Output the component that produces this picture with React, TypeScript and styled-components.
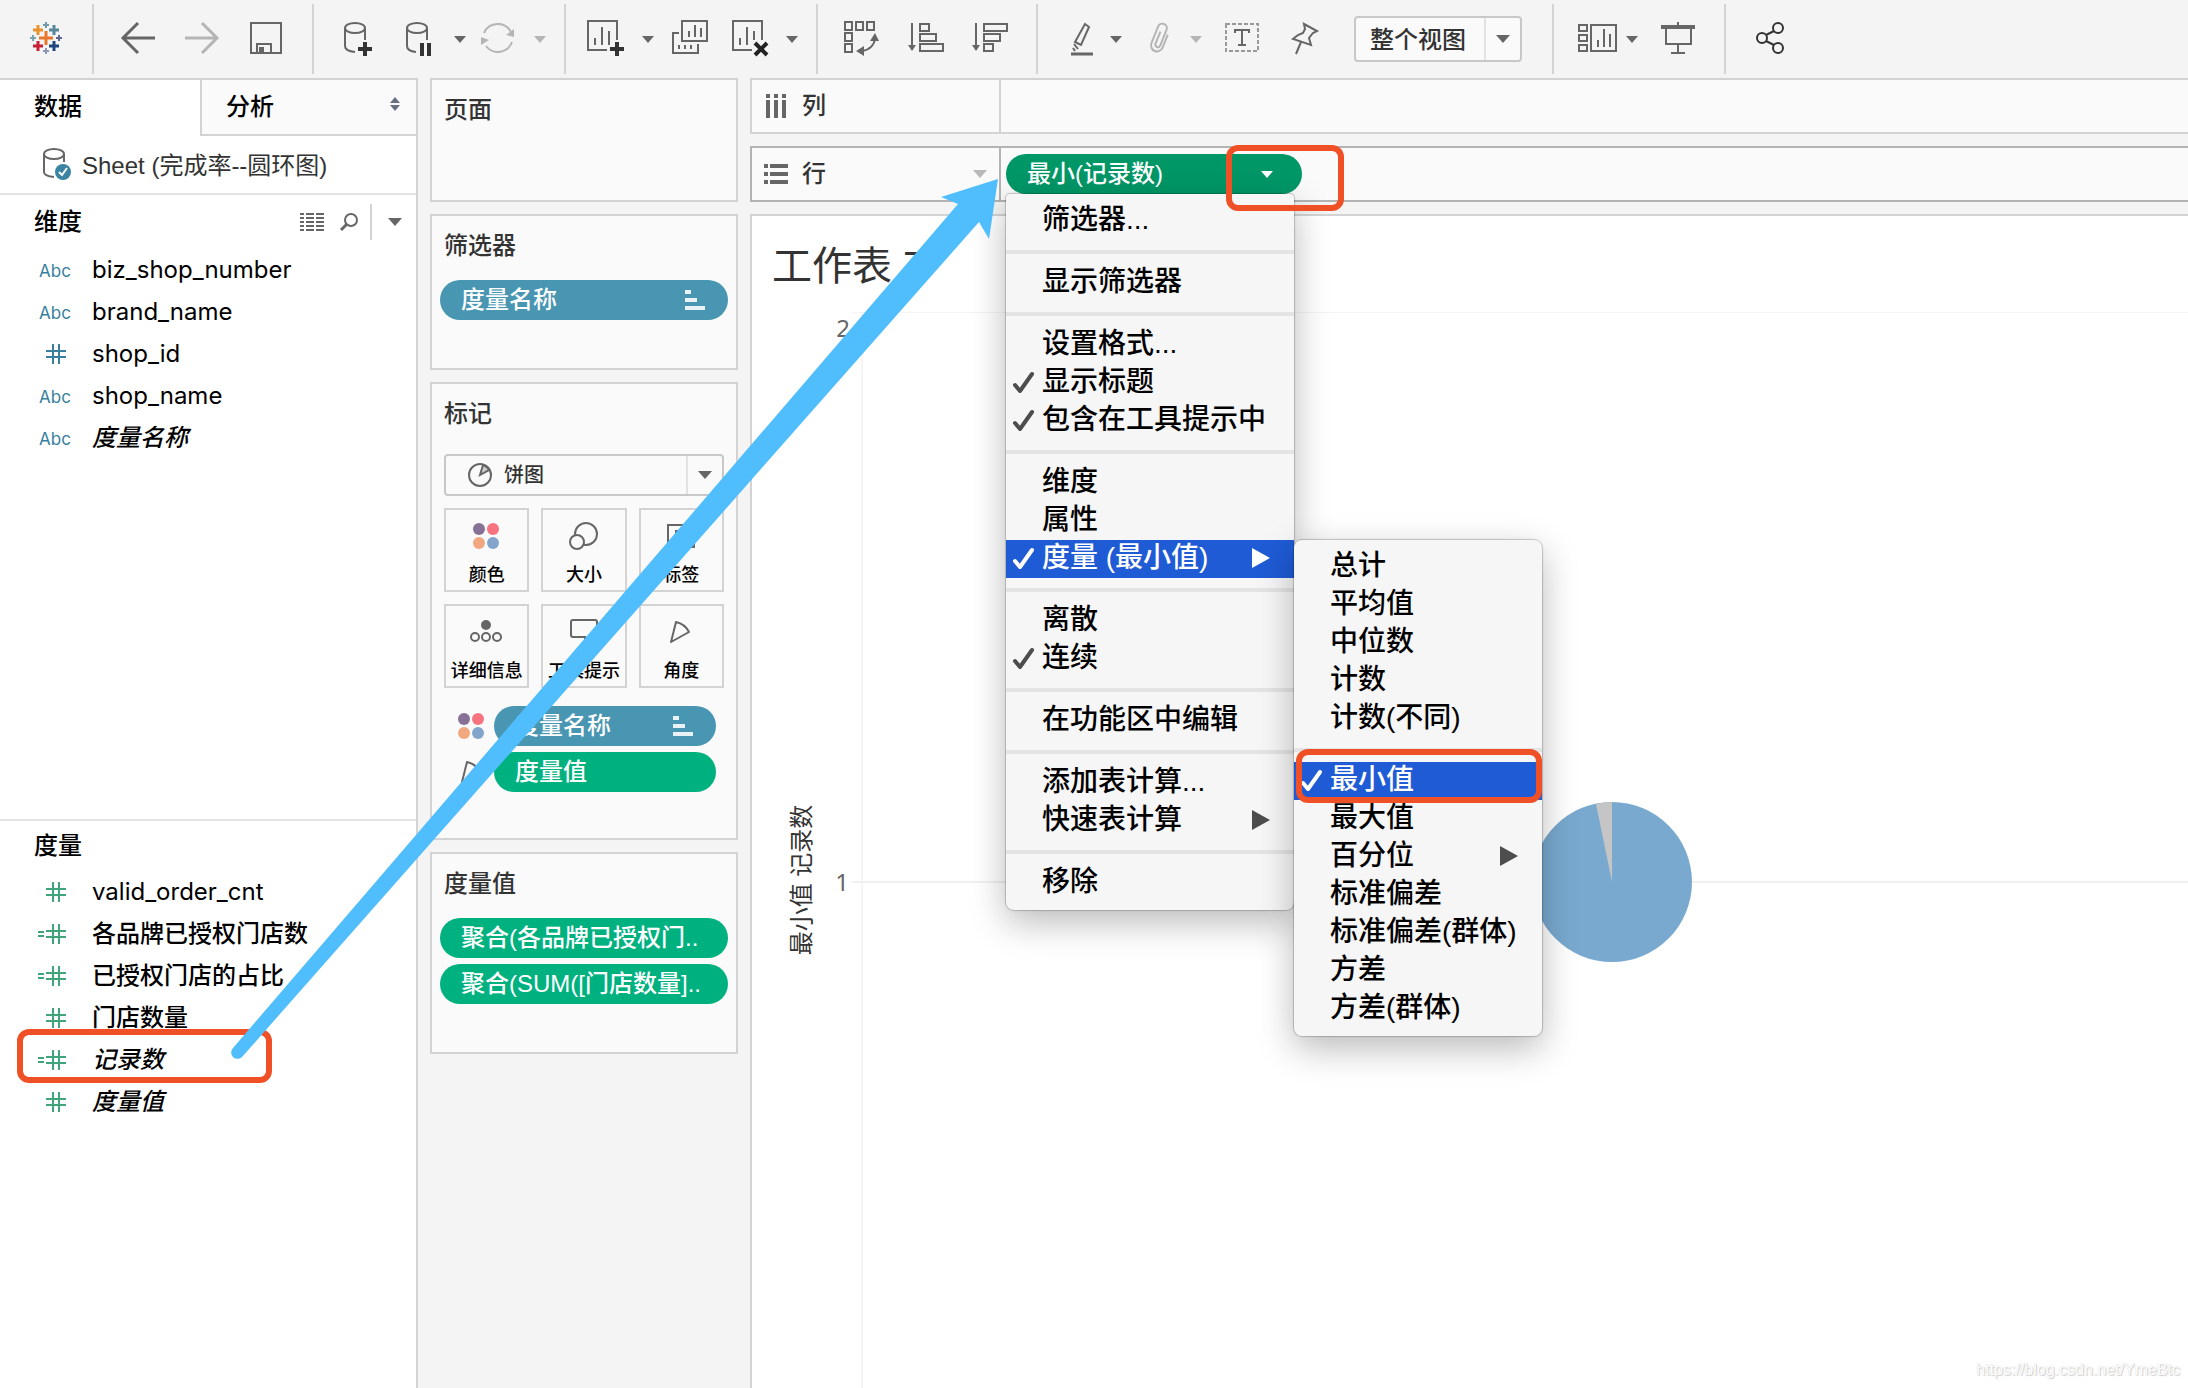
import React from "react";
import styled, { createGlobalStyle, css } from "styled-components";

const latin = `"Inter", "Noto Sans CJK SC", sans-serif`;
const ui = `"Liberation Sans", "Noto Sans CJK SC", sans-serif`;

const c = {
  page: "#f4f4f4",
  card: "#fafafa",
  line: "#d3d3d3",
  lineStrong: "#b3b3b3",
  icon: "#666666",
  iconOff: "#b5b5b5",
  blue: "#4996b2",
  green: "#00b180",
  greenActive: "#009767",
  select: "#1f5bd5",
  mark: "#f05026",
};

const Global = createGlobalStyle`
  *, *::before, *::after { box-sizing: border-box; }
  body { margin: 0; background: ${c.page}; font-family: ${ui}; color: #333; }
  button, select { font: inherit; color: inherit; margin: 0; }
  button { background: none; border: 0; padding: 0; text-align: left; }
  ul, h1, h2 { margin: 0; padding: 0; font-weight: inherit; list-style: none; }
`;

const Page = styled.div`
  position: relative;
  min-height: 100vh;
  display: flex;
  flex-direction: column;
  overflow: hidden;
`;

/* ---------- toolbar ---------- */

const Toolbar = styled.header`
  height: 78px;
  display: flex;
  align-items: center;
`;

const Group = styled.div<{ $end: number; $last?: boolean }>`
  height: 70px;
  display: flex;
  flex: none;
  align-items: center;
  padding-right: ${(p) => p.$end}px;
  border-right: ${(p) => (p.$last ? 0 : 2)}px solid ${c.line};
`;

const Tool = styled.button<{ $gap: number; $off?: boolean; $dark?: boolean }>`
  flex: none;
  height: 40px;
  margin-left: ${(p) => p.$gap}px;
  color: ${(p) => (p.$off ? c.iconOff : p.$dark ? "#333" : c.icon)};
`;

const Drawing = styled.svg`
  display: block;
  overflow: visible;
  fill: none;
  stroke: currentColor;
  stroke-width: 2;
`;

const Tri = styled.span<{ $w?: number; $color?: string }>`
  display: block;
  width: 0;
  height: 0;
  margin: 0 auto;
  border: solid transparent;
  border-width: ${(p) => (p.$w ?? 12) / 2 + 1}px ${(p) => (p.$w ?? 12) / 2}px 0;
  border-top-color: ${(p) => p.$color ?? "currentColor"};
`;

const CaretTool = styled(Tool)`
  width: 20px;
`;

const SelectBox = styled.div<{ $h: number; $w?: string; $gap?: number }>`
  position: relative;
  flex: none;
  display: flex;
  align-items: center;
  width: ${(p) => p.$w ?? "auto"};
  height: ${(p) => p.$h}px;
  margin-left: ${(p) => p.$gap ?? 0}px;
  border: 2px solid #c8c8c8;
  border-radius: 4px;
  background: ${c.card};
`;

const Select = styled.select<{ $size: number; $indent: number }>`
  appearance: none;
  flex: 1;
  height: 100%;
  padding: 0 36px 0 ${(p) => p.$indent}px;
  border: 0;
  background: none;
  font-size: ${(p) => p.$size}px;
  font-weight: 500;
  color: #333;
`;

const SelectCaret = styled.span`
  position: absolute;
  inset: 0 0 0 auto;
  width: 36px;
  display: flex;
  align-items: center;
  border-left: 2px solid #e2e2e2;
  pointer-events: none;
  color: ${c.icon};
`;

const SelectIcon = styled.span`
  position: absolute;
  left: 22px;
  color: ${c.icon};
`;

type IconProps = { x: number; children: React.ReactNode };
const Icon = ({ x, children }: IconProps) => (
  <Drawing width="40" height="40" viewBox={`${x} 19 40 40`} aria-hidden="true">
    {children}
  </Drawing>
);

const Caret = ({ gap, off }: { gap: number; off?: boolean }) => (
  <CaretTool $gap={gap} $off={off} aria-label="更多">
    <Tri />
  </CaretTool>
);

const plus = (x: number, y: number, r: number) => `M${x - r} ${y}H${x + r}M${x} ${y - r}V${y + r}`;

const logo: [number, number, number, number, string][] = [
  [46, 38, 7, 3, "#e8762c"],
  [38, 30, 5, 3, "#eb912b"],
  [54, 30, 5, 3, "#59879b"],
  [38, 46, 5, 3, "#c72035"],
  [54, 46, 5, 3, "#1f457e"],
  [46, 25, 3, 2, "#7199a6"],
  [46, 51, 3, 2, "#8d96b8"],
  [33, 38, 3, 2, "#7aa3b0"],
  [59, 38, 3, 2, "#5b6591"],
];

const TopBar = () => (
  <Toolbar>
    <Group $end={28}>
      <Tool $gap={24} aria-label="开始页面">
        <Icon x={24}>
          {logo.map(([x, y, r, w, s]) => (
            <path key={`${x}-${y}`} d={plus(x, y, r)} stroke={s} strokeWidth={w} />
          ))}
        </Icon>
      </Tool>
    </Group>
    <Group $end={22}>
      <Tool $gap={28} aria-label="撤消">
        <Icon x={122}>
          <path d="M155 38H123M138 23L123 38L138 53" strokeWidth="3" />
        </Icon>
      </Tool>
      <Tool $gap={24} $off aria-label="重做">
        <Icon x={186}>
          <path d="M185 38H217M202 23L217 38L202 53" strokeWidth="3" />
        </Icon>
      </Tool>
      <Tool $gap={24} aria-label="保存">
        <Icon x={250}>
          <path d="M251 23H281V53H251ZM257 53V44H271V53" />
          <path d="M259 47H264V53H259Z" fill="currentColor" stroke="none" />
        </Icon>
      </Tool>
    </Group>
    <Group $end={14}>
      <Tool $gap={28} aria-label="新建数据源">
        <Icon x={342}>
          <ellipse cx="355" cy="28" rx="10" ry="5" />
          <path d="M345 28V46Q345 51 355 52M365 28V40" />
          <path d={plus(365, 49, 7)} stroke="#333" strokeWidth="4" />
        </Icon>
      </Tool>
      <Tool $gap={24} aria-label="暂停自动更新">
        <Icon x={406}>
          <ellipse cx="417" cy="28" rx="10" ry="5" />
          <path d="M407 28V46Q407 51 416 52M427 28V40" />
          <path d="M422 43V56M429 43V56" stroke="#333" strokeWidth="4" />
        </Icon>
      </Tool>
      <Caret gap={4} />
      <Tool $gap={8} $off aria-label="刷新">
        <Icon x={478}>
          <path d="M484 33A15 15 0 0 1 511 32M512 42A15 15 0 0 1 486 46" />
          <path d="M514 29V37L506 35ZM481 45V37L489 40Z" fill="currentColor" stroke="none" />
        </Icon>
      </Tool>
      <Caret gap={12} off />
    </Group>
    <Group $end={14}>
      <Tool $gap={20} aria-label="新建工作表">
        <Icon x={586}>
          <path d="M617 40V21H588V50H607M595 38V45M602 27V45M609 31V45" />
          <path d={plus(617, 49, 7)} stroke="#333" strokeWidth="4" />
        </Icon>
      </Tool>
      <Caret gap={12} />
      <Tool $gap={12} aria-label="复制">
        <Icon x={670}>
          <path d="M682 21H707V41H682ZM679 33H673V53H698V44M689 31V37M695 25V37M701 28V37M679 45V49M685 45V49M691 45V49" />
        </Icon>
      </Tool>
      <Tool $gap={20} aria-label="清除工作表">
        <Icon x={730}>
          <path d="M762 40V21H733V50H752M740 38V45M747 27V45M754 31V40" />
          <path d="M755 43L767 55M767 43L755 55" stroke="#222" strokeWidth="4" />
        </Icon>
      </Tool>
      <Caret gap={12} />
    </Group>
    <Group $end={26}>
      <Tool $gap={24} aria-label="交换行和列">
        <Icon x={842}>
          <path d="M845 22H852V30H845ZM856 22H863V30H856ZM867 22H874V30H867ZM845 33H852V41H845ZM845 44H852V52H845ZM875 38Q874 49 862 51" />
          <path d="M875 33L879 41H870ZM856 51L864 46V56Z" fill="currentColor" stroke="none" />
        </Icon>
      </Tool>
      <Tool $gap={24} aria-label="升序排序">
        <Icon x={906}>
          <path d="M912 23V46M920 24H929V31H920ZM920 34H936V41H920ZM920 44H943V51H920Z" />
          <path d="M908 45H916L912 51Z" fill="currentColor" stroke="none" />
        </Icon>
      </Tool>
      <Tool $gap={24} aria-label="降序排序">
        <Icon x={970}>
          <path d="M976 23V46M984 24H1007V31H984ZM984 34H1000V41H984ZM984 44H993V51H984Z" />
          <path d="M972 45H980L976 51Z" fill="currentColor" stroke="none" />
        </Icon>
      </Tool>
    </Group>
    <Group $end={30}>
      <Tool $gap={28} aria-label="突出显示">
        <Icon x={1066}>
          <path d="M1085 24L1089 27L1081 45L1075 42ZM1074 44L1078 49M1073 48L1075 51" />
          <path d="M1071 54H1093" strokeWidth="3" />
        </Icon>
      </Tool>
      <Caret gap={0} />
      <Tool $gap={12} $off aria-label="组成员">
        <Icon x={1138}>
          <path
            transform="translate(1160 38) rotate(22)"
            d="M6 -6V8a6 6 0 0 1 -12 0V-10a4.500 4.500 0 0 1 9 0V7a2 2 0 0 1 -5 0V-6"
          />
        </Icon>
      </Tool>
      <Caret gap={8} off />
      <Tool $gap={16} aria-label="显示标记标签">
        <Icon x={1222}>
          <rect x="1226" y="24" width="32" height="27" stroke="#999" strokeDasharray="4 2" />
          <path d="M1235 33V30H1249V33M1242 30V45M1238 45H1246" />
        </Icon>
      </Tool>
      <Tool $gap={24} aria-label="固定轴">
        <Icon x={1286}>
          <path d="M1304 24L1317 31L1313 33L1309 38L1311 45L1293 39L1298 35L1303 33L1305 29ZM1301 42L1296 54" />
        </Icon>
      </Tool>
      <SelectBox $h={46} $w="168px" $gap={28}>
        <Select $size={24} $indent={14} aria-label="适合" defaultValue="整个视图">
          <option>整个视图</option>
        </Select>
        <SelectCaret>
          <Tri $w={14} />
        </SelectCaret>
      </SelectBox>
    </Group>
    <Group $end={26}>
      <Tool $gap={24} aria-label="显示/隐藏卡">
        <Icon x={1578}>
          <path d="M1579 25H1587V31H1579ZM1579 35H1587V41H1579ZM1579 45H1587V51H1579ZM1591 25H1616V51H1591ZM1598 40V47M1604 29V47M1610 34V47" />
        </Icon>
      </Tool>
      <Caret gap={4} />
      <Tool $gap={16} aria-label="演示模式">
        <Icon x={1658}>
          <path d="M1666 29V44H1691V29M1678 22V26M1678 44V53M1671 53H1685" />
          <path d="M1661 27H1695" strokeWidth="4" />
        </Icon>
      </Tool>
    </Group>
    <Group $end={0} $last>
      <Tool $gap={24} $dark aria-label="共享">
        <Icon x={1750}>
          <circle cx="1778" cy="28" r="5" />
          <circle cx="1762" cy="38" r="5" />
          <circle cx="1778" cy="48" r="5" />
          <path d="M1766 35L1774 31M1766 41L1774 45" />
        </Icon>
      </Tool>
    </Group>
  </Toolbar>
);

/* ---------- data pane ---------- */

const Body = styled.div`
  flex: 1;
  display: flex;
  align-items: stretch;
`;

const DataPane = styled.aside`
  flex: none;
  width: 418px;
  display: flex;
  flex-direction: column;
  background: #fff;
  border: solid ${c.line};
  border-width: 2px 2px 0 0;
  color: #000;
`;

const Tabs = styled.div`
  display: flex;
  height: 56px;
  font-size: 24px;
  font-weight: 500;
`;

const Tab = styled.button<{ $active?: boolean }>`
  display: flex;
  align-items: center;
  justify-content: space-between;
  padding: 0 14px 8px 34px;
  ${(p) =>
    p.$active
      ? css`
          width: 200px;
        `
      : css`
          flex: 1;
          padding: 0 13px 6px 24px;
          background: ${c.card};
          border: solid ${c.line};
          border-width: 0 0 2px 2px;
        `}
`;

const Source = styled.div`
  display: flex;
  align-items: center;
  gap: 10px;
  height: 59px;
  padding: 0 0 2px 42px;
  border-bottom: 2px solid #e4e4e4;
  font-size: 24px;
  color: #333;
`;

const Section = styled.section<{ $grow: number }>`
  flex: ${(p) => p.$grow} 1 0;
  & + & {
    border-top: 2px solid #e4e4e4;
  }
`;

const SectionHead = styled.div<{ $h: number }>`
  display: flex;
  align-items: center;
  height: ${(p) => p.$h}px;
  padding: 0 14px 0 34px;
  color: ${c.icon};
`;

const SectionTitle = styled.h2`
  flex: 1;
  font-size: 24px;
  font-weight: 500;
  line-height: 36px;
  color: #000;
`;

const HeadTools = styled.div`
  display: flex;
  align-items: center;
  gap: 16px;
`;

const HeadMore = styled.button`
  height: 36px;
  margin-left: -4px;
  padding-left: 16px;
  border-left: 2px solid ${c.line};
  color: ${c.icon};
`;

const Field = styled.li<{ $tone: string }>`
  position: relative;
  display: flex;
  align-items: center;
  height: 42px;
  padding-left: 38px;
  color: ${(p) => p.$tone};
  font-family: ${latin};
`;

const FieldType = styled.span`
  width: 54px;
`;

const FieldTypeText = styled(FieldType)`
  padding: 2px 0 0 1px;
  font-size: 17px;
  line-height: 20px;
`;

const FieldName = styled.button<{ $italic?: boolean }>`
  font-size: 24px;
  line-height: 36px;
  color: #000;
  font-style: ${(p) => (p.$italic ? "italic" : "normal")};
  &:lang(zh) {
    font-weight: 500;
  }
`;

/* Red frame drawn by the annotator around a control. */
const Frame = styled.span<{ $t: number; $r: number; $b: number; $l: number }>`
  position: absolute;
  z-index: 3;
  top: ${(p) => p.$t}px;
  right: ${(p) => p.$r}px;
  bottom: ${(p) => p.$b}px;
  left: ${(p) => p.$l}px;
  border: 6px solid ${c.mark};
  border-radius: 12px;
  pointer-events: none;
`;

const TypeIcon = ({ kind }: { kind: string }) =>
  kind === "abc" ? (
    <FieldTypeText>Abc</FieldTypeText>
  ) : (
    <FieldType>
      <Drawing width="28" height="20" viewBox="38 0 28 20" aria-hidden="true">
        <path d="M46 7H66M46 13H66M53 0V20M59 0V20" />
        {kind === "calc" && <path d="M38 8H44M38 12H44" />}
      </Drawing>
    </FieldType>
  );

type FieldDef = { name: string; kind: string; zh?: boolean; italic?: boolean; framed?: boolean };

const dimensions: FieldDef[] = [
  { name: "biz_shop_number", kind: "abc" },
  { name: "brand_name", kind: "abc" },
  { name: "shop_id", kind: "num" },
  { name: "shop_name", kind: "abc" },
  { name: "度量名称", kind: "abc", zh: true, italic: true },
];

const measures: FieldDef[] = [
  { name: "valid_order_cnt", kind: "num" },
  { name: "各品牌已授权门店数", kind: "calc", zh: true },
  { name: "已授权门店的占比", kind: "calc", zh: true },
  { name: "门店数量", kind: "num", zh: true },
  { name: "记录数", kind: "calc", zh: true, italic: true, framed: true },
  { name: "度量值", kind: "num", zh: true, italic: true },
];

const FieldList = ({ items, tone }: { items: FieldDef[]; tone: string }) => (
  <ul>
    {items.map((f) => (
      <Field key={f.name} $tone={tone}>
        <TypeIcon kind={f.kind} />
        <FieldName $italic={f.italic} lang={f.zh ? "zh" : "en"}>
          {f.name}
        </FieldName>
        {f.framed && <Frame $t={-10} $r={144} $b={-2} $l={17} />}
      </Field>
    ))}
  </ul>
);

const LeftPane = () => (
  <DataPane>
    <Tabs>
      <Tab $active>数据</Tab>
      <Tab>
        分析
        <Drawing width="16" height="16" viewBox="0 0 16 16" aria-hidden="true">
          <path d="M3 7L8 1L13 7ZM3 9H13L8 15Z" fill="#667080" stroke="none" />
        </Drawing>
      </Tab>
    </Tabs>
    <Source>
      <Drawing width="30" height="32" viewBox="42 149 30 32" aria-hidden="true">
        <g stroke={c.icon}>
          <ellipse cx="54" cy="155" rx="10" ry="5" />
          <path d="M44 155V173Q44 177 54 178M64 155V163" />
        </g>
        <circle cx="63" cy="173" r="8" fill="#3a83a3" stroke="none" />
        <path d="M59 173L62 176L67 169" stroke="#fff" />
      </Drawing>
      <span>Sheet (完成率--圆环图)</span>
    </Source>
    <Section $grow={11}>
      <SectionHead $h={54}>
        <SectionTitle>维度</SectionTitle>
        <HeadTools>
          <button aria-label="查看数据">
            <Drawing width="24" height="20" viewBox="0 0 24 20" aria-hidden="true">
              <path d="M0 2H4M6 2H14M16 2H24M0 6H4M6 6H14M16 6H24M0 10H4M6 10H14M16 10H24M0 14H4M6 14H14M16 14H24M0 18H4M6 18H14M16 18H24" stroke={c.icon} />
            </Drawing>
          </button>
          <button aria-label="查找字段">
            <Drawing width="18" height="18" viewBox="0 0 18 18" aria-hidden="true">
              <circle cx="11" cy="7" r="6" stroke={c.icon} />
              <path d="M7 11L1 17" stroke={c.icon} strokeWidth="3" />
            </Drawing>
          </button>
          <HeadMore aria-label="更多">
            <Tri $w={14} />
          </HeadMore>
        </HeadTools>
      </SectionHead>
      <FieldList items={dimensions} tone="#38809e" />
    </Section>
    <Section $grow={10}>
      <SectionHead $h={50}>
        <SectionTitle>度量</SectionTitle>
      </SectionHead>
      <FieldList items={measures} tone="#3fa37b" />
    </Section>
  </DataPane>
);

/* ---------- cards ---------- */

const Cards = styled.div`
  flex: none;
  width: 332px;
  padding: 0 12px;
  display: flex;
  flex-direction: column;
  gap: 12px;
`;

const Card = styled.section<{ $min: number }>`
  min-height: ${(p) => p.$min}px;
  border: 2px solid ${c.line};
  background: ${c.card};
  padding: 12px 12px 0;
`;

const CardTitle = styled.h2<{ $roomy?: boolean }>`
  && {
    margin-bottom: ${(p) => (p.$roomy ? 22 : 16)}px;
  }
  font-size: 24px;
  font-weight: 500;
  line-height: 36px;
`;

const PillStack = styled.div<{ $inset?: boolean }>`
  display: flex;
  flex-direction: column;
  gap: 6px;
  margin: ${(p) => (p.$inset ? "18px 8px 0 0" : "0 -4px")};
`;

const Pill = styled.button<{ $tone: string }>`
  flex: 1;
  min-width: 0;
  display: flex;
  align-items: center;
  height: 40px;
  padding: 0 23px 0 21px;
  border-radius: 20px;
  background: ${(p) => p.$tone};
  color: #fff;
  font-size: 24px;
  font-weight: 500;
  line-height: 40px;
  white-space: nowrap;
`;

const PillText = styled.span`
  flex: 1;
`;

const MarkRow = styled.div`
  display: flex;
  align-items: center;
  color: ${c.icon};
`;

const MarkIcon = styled.span`
  flex: none;
  width: 50px;
  padding-left: 12px;
`;

const MarkGrid = styled.div`
  display: grid;
  grid-template-columns: repeat(3, 1fr);
  gap: 12px;
  margin-top: 12px;
`;

const MarkButton = styled.button`
  display: flex;
  flex-direction: column;
  align-items: center;
  justify-content: space-between;
  height: 84px;
  padding: 10px 0 1px;
  border: 2px solid ${c.line};
  color: ${c.icon};
`;

const MarkLabel = styled.span`
  font-size: 18px;
  font-weight: 500;
  line-height: 28px;
  color: #000;
`;

const SortGlyph = () => (
  <Drawing width="20" height="20" viewBox="0 0 20 20" aria-hidden="true">
    <path d="M0 2H6M0 10H12M0 18H20" stroke="#e9f2f6" strokeWidth="4" />
  </Drawing>
);

const Glyph = ({ children }: { children: React.ReactNode }) => (
  <Drawing width="32" height="32" viewBox="0 0 32 32" aria-hidden="true">
    {children}
  </Drawing>
);

const dots = (
  <g stroke="none">
    <circle cx="8" cy="9" r="6" fill="#877196" />
    <circle cx="22" cy="9" r="6" fill="#f7737f" />
    <circle cx="8" cy="23" r="6" fill="#f1a880" />
    <circle cx="22" cy="23" r="6" fill="#84a5cb" />
  </g>
);

const wedge = <path d="M11 6L6 26L24 16Q20 8 11 6Z" strokeLinejoin="round" />;

const markButtons: [string, React.ReactNode][] = [
  ["颜色", dots],
  [
    "大小",
    <>
      <circle cx="18" cy="14" r="11" />
      <circle cx="9" cy="22" r="7" fill={c.card} />
    </>,
  ],
  [
    "标签",
    <>
      <rect x="3" y="5" width="26" height="22" />
      <path d="M11 14V11H21V14M16 11V22" />
    </>,
  ],
  [
    "详细信息",
    <>
      <circle cx="15" cy="9" r="4" fill="currentColor" />
      <circle cx="4" cy="21" r="4" />
      <circle cx="15" cy="21" r="4" />
      <circle cx="26" cy="21" r="4" />
    </>,
  ],
  ["工具提示", <path d="M5 4H27Q29 4 29 6V19Q29 21 27 21H22L17 26V21H5Q3 21 3 19V6Q3 4 5 4Z" />],
  ["角度", wedge],
];

const MarkSelect = () => (
  <SelectBox $h={42}>
    <SelectIcon>
      <Drawing width="24" height="24" viewBox="0 0 24 24" aria-hidden="true">
        <path d="M12 12L15 2Q19 3 21 7Z" fill="#ccc" />
        <circle cx="12" cy="12" r="11" />
      </Drawing>
    </SelectIcon>
    <Select $size={20} $indent={58} aria-label="标记类型" defaultValue="饼图">
      <option>饼图</option>
    </Select>
    <SelectCaret>
      <Tri $w={14} />
    </SelectCaret>
  </SelectBox>
);

const CardColumn = () => (
  <Cards>
    <Card $min={124}>
      <CardTitle>页面</CardTitle>
    </Card>
    <Card $min={156}>
      <CardTitle>筛选器</CardTitle>
      <PillStack>
        <Pill $tone={c.blue}>
          <PillText>度量名称</PillText>
          <SortGlyph />
        </Pill>
      </PillStack>
    </Card>
    <Card $min={458}>
      <CardTitle $roomy>标记</CardTitle>
      <MarkSelect />
      <MarkGrid>
        {markButtons.map(([label, art]) => (
          <MarkButton key={label}>
            <Glyph>{art}</Glyph>
            <MarkLabel>{label}</MarkLabel>
          </MarkButton>
        ))}
      </MarkGrid>
      <PillStack $inset>
        <MarkRow>
          <MarkIcon>
            <Glyph>{dots}</Glyph>
          </MarkIcon>
          <Pill $tone={c.blue}>
            <PillText>度量名称</PillText>
            <SortGlyph />
          </Pill>
        </MarkRow>
        <MarkRow>
          <MarkIcon>
            <Glyph>{wedge}</Glyph>
          </MarkIcon>
          <Pill $tone={c.green}>
            <PillText>度量值</PillText>
          </Pill>
        </MarkRow>
      </PillStack>
    </Card>
    <Card $min={202}>
      <CardTitle>度量值</CardTitle>
      <PillStack>
        <Pill $tone={c.green}>
          <PillText>聚合(各品牌已授权门..</PillText>
        </Pill>
        <Pill $tone={c.green}>
          <PillText>聚合(SUM([门店数量]..</PillText>
        </Pill>
      </PillStack>
    </Card>
  </Cards>
);

/* ---------- shelves and view ---------- */

const Work = styled.main`
  flex: 1;
  min-width: 0;
  display: flex;
  flex-direction: column;
  gap: 12px;
`;

const Shelf = styled.section<{ $active?: boolean }>`
  display: flex;
  height: 56px;
  border: 2px solid ${(p) => (p.$active ? c.lineStrong : c.line)};
  border-right: 0;
  background: ${c.card};
`;

const ShelfLabel = styled.div<{ $active?: boolean }>`
  display: flex;
  align-items: center;
  gap: 14px;
  width: 249px;
  padding: 0 12px;
  border-right: 2px solid ${(p) => (p.$active ? c.lineStrong : c.line)};
  color: ${c.icon};
`;

const ShelfName = styled.h2`
  flex: 1;
  font-size: 24px;
  font-weight: 500;
  line-height: 36px;
  color: #333;
`;

const PillAnchor = styled.div`
  position: relative;
  align-self: flex-start;
  display: flex;
  width: 296px;
  margin: 6px 0 0 5px;
`;

const PillMore = styled.span`
  width: 24px;
`;

const Sheet = styled.section`
  flex: 1;
  display: flex;
  flex-direction: column;
  border: solid ${c.line};
  border-width: 2px 0 0 2px;
  background: #fff;
`;

const SheetTitle = styled.h1`
  && {
    padding: 20px 20px 0;
  }
  height: 96px;
  font-size: 40px;
  line-height: 60px;
`;

const Chart = styled.svg`
  flex: 1;
  display: block;
  width: 100%;
  min-height: 1076px;
  margin-bottom: -400px;
  font-family: "Noto Sans", "Noto Sans CJK SC", sans-serif;
`;

const AxisTitle = styled.text`
  font-family: ${ui};
  font-size: 24px;
  fill: #333;
  text-anchor: middle;
`;

const Tick = styled.text`
  font-size: 24px;
  fill: #666;
  text-anchor: end;
`;

/* ---------- menus ---------- */

const Menu = styled.div<{ $sub?: boolean }>`
  position: absolute;
  z-index: 2;
  left: ${(p) => (p.$sub ? "100%" : 0)};
  top: ${(p) => (p.$sub ? 0 : "100%")};
  width: ${(p) => (p.$sub ? 248 : 288)}px;
  padding: 8px 0;
  border-radius: ${(p) => (p.$sub ? "8px" : "4px 4px 8px 8px")};
  background: #f6f6f6;
  box-shadow: 0 0 1px 1px rgba(0, 0, 0, 0.2), 0 12px 36px rgba(0, 0, 0, 0.28);
  color: #000;
`;

const MenuEntry = styled.div`
  position: relative;
`;

const MenuItem = styled.button<{ $on?: boolean }>`
  display: flex;
  align-items: center;
  width: 100%;
  height: 38px;
  padding: 0 24px 2px 6px;
  font-size: 28px;
  font-weight: 500;
  line-height: 36px;
  white-space: nowrap;
  color: ${(p) => (p.$on ? "#fff" : "#000")};
  background: ${(p) => (p.$on ? c.select : "transparent")};
`;

const CheckSlot = styled.span<{ $on?: boolean }>`
  flex: none;
  width: 30px;
  padding-top: 2px;
  color: ${(p) => (p.$on ? "#fff" : "#4d4d4d")};
`;

const MenuText = styled.span`
  flex: 1;
`;

const Arrow = styled.span<{ $on?: boolean }>`
  flex: none;
  border: solid transparent;
  border-width: 10px 0 10px 18px;
  border-left-color: ${(p) => (p.$on ? "#fff" : "#4d4d4d")};
`;

const Rule = styled.hr`
  height: 4px;
  margin: 10px 0;
  border: 0;
  background: #e4e4e4;
`;

type Entry = {
  text?: string;
  checked?: boolean;
  on?: boolean;
  arrow?: boolean;
  framed?: boolean;
  sub?: Entry[];
};

const aggregations: Entry[] = [
  { text: "总计" },
  { text: "平均值" },
  { text: "中位数" },
  { text: "计数" },
  { text: "计数(不同)" },
  {},
  { text: "最小值", checked: true, on: true, framed: true },
  { text: "最大值" },
  { text: "百分位", arrow: true },
  { text: "标准偏差" },
  { text: "标准偏差(群体)" },
  { text: "方差" },
  { text: "方差(群体)" },
];

const pillMenu: Entry[] = [
  { text: "筛选器..." },
  {},
  { text: "显示筛选器" },
  {},
  { text: "设置格式..." },
  { text: "显示标题", checked: true },
  { text: "包含在工具提示中", checked: true },
  {},
  { text: "维度" },
  { text: "属性" },
  { text: "度量 (最小值)", checked: true, on: true, arrow: true, sub: aggregations },
  {},
  { text: "离散" },
  { text: "连续", checked: true },
  {},
  { text: "在功能区中编辑" },
  {},
  { text: "添加表计算..." },
  { text: "快速表计算", arrow: true },
  {},
  { text: "移除" },
];

const MenuList = ({ items, sub }: { items: Entry[]; sub?: boolean }) => (
  <Menu role="menu" $sub={sub}>
    {items.map((e, i) =>
      e.text ? (
        <MenuEntry key={i}>
          <MenuItem role="menuitem" $on={e.on}>
            <CheckSlot $on={e.on}>
              {e.checked && (
                <Drawing width="24" height="24" viewBox="0 0 24 24" aria-hidden="true">
                  <path d="M3 14L8 20L20 3" strokeWidth="4" strokeLinecap="round" strokeLinejoin="round" />
                </Drawing>
              )}
            </CheckSlot>
            <MenuText>{e.text}</MenuText>
            {e.arrow && <Arrow $on={e.on} />}
          </MenuItem>
          {e.sub && <MenuList items={e.sub} sub />}
          {e.framed && <Frame $t={-13} $r={0} $b={-3} $l={2} />}
        </MenuEntry>
      ) : (
        <Rule key={i} />
      ),
    )}
  </Menu>
);

const WorkArea = () => (
  <Work>
    <Shelf>
      <ShelfLabel>
        <Drawing width="24" height="24" viewBox="0 0 24 24" aria-hidden="true">
          <path d="M4 0V4M12 0V4M20 0V4M4 6V24M12 6V24M20 6V24" strokeWidth="4" />
        </Drawing>
        <ShelfName>列</ShelfName>
      </ShelfLabel>
    </Shelf>
    <Shelf $active>
      <ShelfLabel $active>
        <Drawing width="24" height="24" viewBox="0 0 24 24" aria-hidden="true">
          <path d="M0 4H4M0 12H4M0 20H4M6 4H24M6 12H24M6 20H24" strokeWidth="4" />
        </Drawing>
        <ShelfName>行</ShelfName>
        <span>
          <Tri $w={14} $color="#b8b8b8" />
        </span>
      </ShelfLabel>
      <PillAnchor>
        <Pill $tone={c.greenActive}>
          <PillText>最小(记录数)</PillText>
          <PillMore>
            <Tri />
          </PillMore>
        </Pill>
        <MenuList items={pillMenu} />
        <Frame $t={-9} $r={-42} $b={-17} $l={220} />
      </PillAnchor>
    </Shelf>
    <Sheet>
      <SheetTitle>工作表 7</SheetTitle>
      <Chart role="img" aria-label="最小值 记录数">
        <path d="M100 0H3000" stroke="#ececec" />
        <path d="M100 570H3000" stroke="#f0f0f0" strokeWidth="2" />
        <path d="M110 0V1400" stroke="#ececec" />
        <Tick x="98" y="25">2</Tick>
        <Tick x="97" y="579">1</Tick>
        <AxisTitle transform="translate(58 568) rotate(-90)">最小值 记录数</AxisTitle>
        <circle cx="860" cy="570" r="80" fill="#79a9cf" />
        <path d="M860 570L844 492A80 80 0 0 1 860 490Z" fill="#c5c5c5" />
      </Chart>
    </Sheet>
  </Work>
);

/* ---------- annotations over the page ---------- */

const DragArrow = styled.svg`
  position: absolute;
  z-index: 5;
  left: 0;
  top: 0;
  pointer-events: none;
`;

const Watermark = styled.div`
  position: absolute;
  right: 8px;
  bottom: 8px;
  font-size: 16px;
  line-height: 20px;
  color: #fff;
  text-shadow: 1px 1px 1px #ccc, 0 0 1px #ccc;
`;

export default function App() {
  return (
    <Page>
      <Global />
      <TopBar />
      <Body>
        <LeftPane />
        <CardColumn />
        <WorkArea />
      </Body>
      <DragArrow width="1010" height="1070" viewBox="0 0 1010 1070" aria-hidden="true">
        <path
          d="M998 179L941 197L958 204L233 1048A6 6 0 0 0 242 1057L979 222L989 239Z"
          fill="#50befc"
        />
      </DragArrow>
      <Watermark>https://blog.csdn.net/YmeBtc</Watermark>
    </Page>
  );
}
